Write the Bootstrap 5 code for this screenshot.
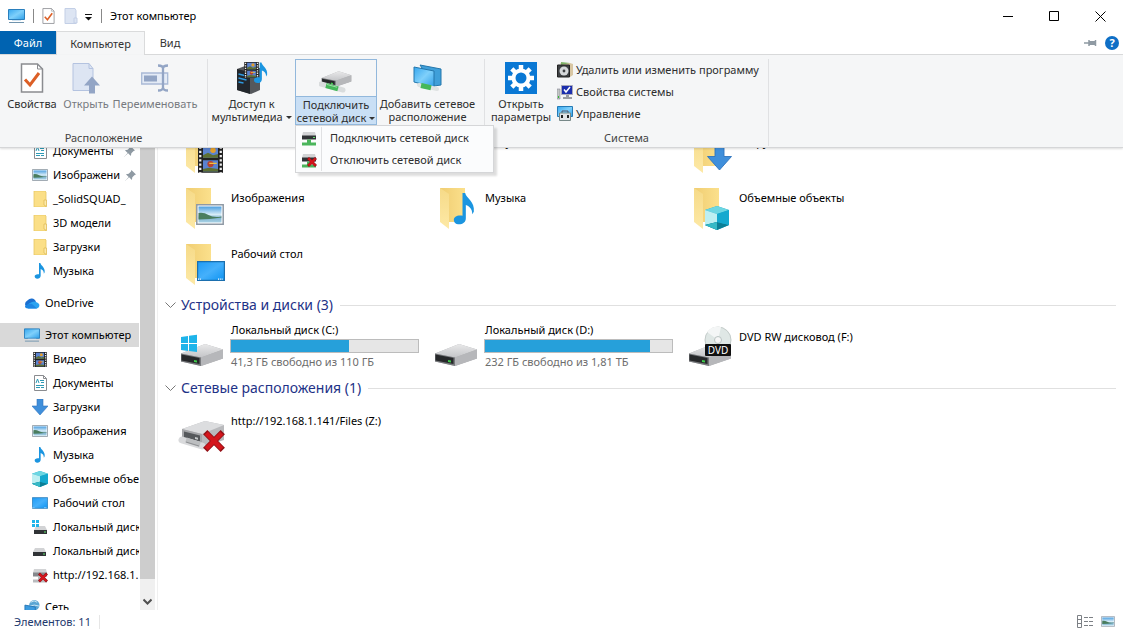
<!DOCTYPE html>
<html lang="ru">
<head>
<meta charset="utf-8">
<meta name="viewport" content="width=device-width, initial-scale=1">
<title>Этот компьютер</title>
<link href="https://cdn.jsdelivr.net/npm/bootstrap@5.3.0/dist/css/bootstrap.min.css" rel="stylesheet">
<style>
body{font-family:"Noto Sans","Open Sans",sans-serif;font-size:11px;line-height:16px;color:#000;background:#fff}
button{color:inherit}
a{color:inherit;text-decoration:none}
svg{display:block;flex:none}
.plain{background:none;border:0;padding:0}
.titlebar{height:31px;padding:1px 0 0 8px}
.vline{width:1px;height:14px;background:#888}
.winbtn{width:46px;height:29px}
.tabs{height:24px;border-bottom:1px solid #dadbdc}
.tab{height:24px;padding:0;color:#333}
.tab-file{width:56px;background:#0063b1;color:#fff;height:23px}
.tab-on{width:89px;background:#f5f6f7;border:1px solid #dadbdc;border-bottom:0}
.tab-view{width:50px}
.ribbon{height:93px;background:#f5f6f7;border-bottom:1px solid #d5d6d8;box-shadow:0 1px 2px #0002;z-index:5;color:#2e2e2e;flex-shrink:0}
.titlebar,.tabs,.stat{flex-shrink:0}
.rgroup{border-right:1px solid #e0e1e3;margin:4px 0 1px}
.rgroup>.cap{color:#444;height:16px}
.rbtn{height:66px;line-height:13px;padding-top:3px;white-space:nowrap;display:flex;flex-direction:column;align-items:center;flex-shrink:0}
.rbtn>svg{margin-bottom:3px}
.rbtn.off{color:#777a80}
.w64{width:64px}.w44{width:44px}.w94{width:94px}.w87{width:87px}.w101{width:101px}.w72{width:72px}
.g1{width:208px}.g2{width:277px}.g3{width:284px}
.rl{height:22px;white-space:nowrap;gap:3px}
.rbtn.split{border:1px solid #92b8dc;width:82px;padding:0;align-items:stretch}
.split .pic{height:37px;padding-top:6px;border-bottom:1px solid #92b8dc}
.split .pic svg{margin:0 auto}
.split .txt{height:28px;background:#c9dff5;padding-top:1px}
.car{display:inline-block;border:3px solid transparent;border-top-color:#333;border-bottom:0;vertical-align:2px}
.menu{--bs-dropdown-min-width:199px;--bs-dropdown-padding-y:1px;--bs-dropdown-font-size:11px;--bs-dropdown-border-radius:0;--bs-dropdown-bg:#fbfcfd;--bs-dropdown-item-padding-x:0px;--bs-dropdown-item-padding-y:0px;top:100%;left:0;border-color:#d5d6d8;box-shadow:3px 3px 2px #0002}
.menu .dropdown-item{height:22px;gap:4px;color:#2e2e2e;line-height:22px}
.menu .pic2{width:26px;height:22px;border-right:1px solid #e0e1e3}
.side{width:140px}
.side-in{margin-top:-10px}
.side a{height:24px;padding-left:24px;gap:5px;white-space:nowrap;overflow:hidden;margin-right:1px}
.side a.sub{padding-left:32px}
.side a.cur{background:#d9d9d9}
.side .sp{height:8px}
.sbar{width:15px;background:#f0f0f0}
.thumb{background:#cdcdcd}
.sbtn{height:31px}
.pane{border-left:1px solid #f0f0f0;margin-left:2px;padding-left:7px}
.pane-in{margin:-24px 0 0 13px}
.side-in,.pane-in{position:static;padding-top:1px}
.tiles{display:grid;grid-template-columns:repeat(auto-fill,254px)}
.tile{height:56px;gap:5px}
.tile>svg{margin-top:4px}
.tile .nm{padding-top:9px;white-space:nowrap}
.drv{height:59px}
.drv .nm{padding-top:5px;width:189px;margin-left:-1px}
.drv .nm>span{padding-left:1px;display:block}
.drv .solo{padding-top:12px}
.drv>svg{margin-top:6px}
.meter{--bs-progress-height:14px;--bs-progress-bg:#e6e6e6;--bs-progress-border-radius:0;--bs-progress-bar-bg:#26a0da;border:1px solid #bcbcbc;margin:1px 0}
.grey{color:#6d6d6d}
.sect{height:24px;font-size:14px;line-height:20px;color:#1e3287;gap:5px;margin-left:-13px;padding-right:7px}
.sect i{flex:1;height:1px;background:#e0e0e0;margin-left:2px}
.stat{height:23px;color:#1e3a6e;padding:0 8px 0 14px}
.stat .vb{width:1px;height:14px;background:#e6e6e6}
</style>
</head>
<body class="vh-100 d-flex flex-column overflow-hidden">
<svg width="0" height="0" class="position-absolute" aria-hidden="true">
<defs>
<linearGradient id="gs" x1="0" y1="0" x2="1" y2="1"><stop offset="0" stop-color="#35a6ee"/><stop offset=".5" stop-color="#7fd0fb"/><stop offset="1" stop-color="#2e9fe8"/></linearGradient>
<linearGradient id="gd" x1="0" y1="0" x2="0" y2="1"><stop offset="0" stop-color="#e9e9ea"/><stop offset="1" stop-color="#c4c5c8"/></linearGradient>
<linearGradient id="gf" x1="0" y1="0" x2="1" y2="0"><stop offset="0" stop-color="#f0cd72"/><stop offset="1" stop-color="#fbe08c"/></linearGradient>
<linearGradient id="gf2" x1="0" y1="0" x2="0" y2="1"><stop offset="0" stop-color="#f6da88"/><stop offset="1" stop-color="#fde9a6"/></linearGradient>
<linearGradient id="gk" x1="0" y1="0" x2="0" y2="1"><stop offset="0" stop-color="#4c9fe0"/><stop offset=".5" stop-color="#d7ecf7"/><stop offset=".7" stop-color="#7fb2cf"/><stop offset="1" stop-color="#a9d3e6"/></linearGradient>
<linearGradient id="gt" x1="0" y1="0" x2="1" y2="1"><stop offset="0" stop-color="#1e9bf5"/><stop offset=".5" stop-color="#45b0fb"/><stop offset="1" stop-color="#0c93f2"/></linearGradient>
</defs>
<symbol id="pc" viewBox="0 0 17 16"><path d="M0.5 1.5h16v10H.5z" fill="url(#gs)" stroke="#2a7fbd"/><path d="M1 14.500h15" stroke="#6f93ad"/><path d="M4 12.500h9" stroke="#cfe3f1"/></symbol>
<symbol id="doc" viewBox="0 0 24 30"><path d="M1.500 1h16l5 5v23h-21z" fill="#fff" stroke="#8a8c90" stroke-width="1.500"/><path d="M17.500 1v5h5" fill="none" stroke="#8a8c90"/><path d="M5 16.500l5 5.500 9-12" fill="none" stroke="#dc5f26" stroke-width="3"/></symbol>
<symbol id="docopen" viewBox="0 0 28 31"><path d="M1 1h16l4 5v22H1z" fill="#dde5f3" stroke="#b4c3e0"/><path d="M17 1v5h4" fill="none" stroke="#b4c3e0"/><path d="M20 14l8 9h-5v8h-6v-8h-5z" fill="#93a5c5"/></symbol>
<symbol id="ren" viewBox="0 0 28 28"><path d="M.7 9h26v11H.7z" fill="#e4ebf6" stroke="#a9b9d6" stroke-width="1.300"/><path d="M3 11.500h13v6H3z" fill="#93a5c5"/><path d="M17 1.500q5 0 5 3v19q0 3-5 3M27 1.500q-5 0-5 3M22 23.500q0 3 5 3" fill="none" stroke="#93a5c5" stroke-width="2.300"/></symbol>
<symbol id="film" viewBox="0 0 20 22"><path d="M0 0h20v22H0z" fill="#222"/><path d="M4 1h12v9H4zM4 12h12v9H4z" fill="#5b83cf"/><path d="M4 8l4-2 4 2 4-1v3H4zM4 19l5-1 7 1v2H4z" fill="#5d6f33"/><circle cx="12" cy="4" r="2.200" fill="#e3a02c"/><circle cx="10" cy="15" r="2.500" fill="#b7432f"/><path d="M9 14h6v1H9z" fill="#f2c13c"/><path d="M1.800 1v21M18.200 1v21" stroke="#eee" stroke-width="1.800" stroke-dasharray="1.800 1.600"/></symbol>
<symbol id="note" viewBox="0 0 16 24"><path d="M6.500 0h2c.8 4 7.500 6.500 6.500 14l-1.200 2c.2-4-2-6-4.800-7v10c0 3-2.500 4.500-5 4.500S0 22 0 20s2.500-3.700 6.500-3z" fill="#1b95e0"/></symbol>
<symbol id="media" viewBox="0 0 32 32"><path d="M1 7l8-3 15 2v22l-9 4-14-4z" fill="#55585c"/><path d="M1 7l13 3v22L1 28z" fill="#23272c"/><path d="M2.500 12l8 2M2.500 16l8 2M2.500 20l5 1" stroke="#2f9ae0" stroke-width="1.300"/><use href="#film" x="8" y="0" width="15" height="16"/><use href="#note" x="18" y="0" width="14" height="22"/></symbol>
<symbol id="drive" viewBox="0 0 44 24"><path d="M1 10.500L25 1l18 5.500v9L21 23 1 18.500z" fill="#aeafb2"/><path d="M1 10.500L25 1 43 6.500 21 14.500z" fill="url(#gd)"/><path d="M21 14.500L43 6.500v9L21 23z" fill="#b6b7ba"/><path d="M1 10.500l20 4V23L1 18.500z" fill="#77797c"/><path d="M1.500 11.500l18 3.600v6L1.500 17.500z" fill="#26282a"/><path d="M14 17l3 .6v2l-3-.6z" fill="#3fca4b"/></symbol>
<symbol id="ndrive" viewBox="0 0 44 28"><path d="M1 9L24 1l19 4v15L21 27 1 21z" fill="#b9babd"/><path d="M1 9L24 1l19 4-22 9z" fill="#dcdddf"/><path d="M1 9l20 5v13L1 21z" fill="#a5a6a9"/><path d="M3 11.500l16 4v6L3 17.500z" fill="#56595c"/><path d="M14 17l3 .7v2l-3-.7z" fill="#c6c9cb"/></symbol>
<symbol id="netd" viewBox="0 0 34 24"><use href="#drive" x="2" y="0" width="31" height="18"/><path d="M2 14l22 6" stroke="#d9dcdd" stroke-width="5" stroke-linecap="round"/><path d="M7 15.500l12 3.300" stroke="#45b85a" stroke-width="5"/><path d="M8 14.500l10 2.700" stroke="#9fe0a6"/></symbol>
<symbol id="screens" viewBox="0 0 30 28"><path d="M7 1l21 4v16l-7 1z" fill="#3f9fd9" stroke="#2477ac"/><path d="M1 3l20 4v16L1 18z" fill="url(#gs)" stroke="#2477ac"/><path d="M6 21l18 4" stroke="#dfe3e3" stroke-width="4" stroke-linecap="round"/><path d="M8 21.500l10 2.200" stroke="#45b85a" stroke-width="5"/></symbol>
<symbol id="gear" viewBox="0 0 32 32"><path d="M0 0h32v32H0z" fill="#0a78d4"/><circle cx="16" cy="16" r="7.500" fill="none" stroke="#fff" stroke-width="4"/><g stroke="#fff" stroke-width="4.500"><path d="M16 3v4.500M16 24.500V29M3 16h4.500M24.500 16H29M6.800 6.800L10 10M22 22l3.200 3.200M25.200 6.800L22 10M10 22l-3.200 3.200"/></g></symbol>
<symbol id="prog" viewBox="0 0 16 16"><path d="M3 1h10l3 1v11l-3 2z" fill="#d9c7a4"/><path d="M4 0l9 1-9 2z" fill="#7fb268"/><path d="M.5 3h12v12H.5z" fill="#3d4043" stroke="#222"/><circle cx="7" cy="9" r="4.500" fill="#d5d8da"/><circle cx="7" cy="9" r="1.400" fill="#3d4043"/></symbol>
<symbol id="sys" viewBox="0 0 16 16"><path d="M0 5h3v10H0z" fill="#c2c6c4" stroke="#889" stroke-width=".6"/><path d="M1 12h1v2H1z" fill="#3b3"/><path d="M4.500 1.500h11v9h-11z" fill="#1c2fae" stroke="#aab"/><path d="M7 5.500l2 2.500 4-5" fill="none" stroke="#fff" stroke-width="1.500"/><path d="M9 11h3v2h3v2H6v-2h3z" fill="#9a9da2"/></symbol>
<symbol id="mng" viewBox="0 0 16 16"><path d="M.5.5h15v10H.5z" fill="url(#gs)" stroke="#247ab5"/><path d="M5 7V5h6v2" fill="none" stroke="#556"/><path d="M2.500 7h11v7.500h-11z" fill="#e1e4e6" stroke="#788"/><path d="M4 9h2v3H4zM10 9h2v3h-2z" fill="#222"/></symbol>
<symbol id="mnet" viewBox="0 0 16 15"><path d="M2 1h12l1 4H1z" fill="#d2d3d5"/><path d="M1 4.500h14v4H1z" fill="#303336"/><path d="M12 6h2v1h-2z" fill="#5fe36a"/><path d="M6 8.500h4v3h5v3H1v-3h5z" fill="#4bb55c"/></symbol>
<symbol id="xx" viewBox="0 0 20 20"><path d="M2 2l16 16M18 2L2 18" stroke="#931218" stroke-width="5.500"/><path d="M3 3l14 14M17 3L3 17" stroke="#d4151c" stroke-width="4"/></symbol>
<symbol id="mnetx" viewBox="0 0 16 15"><use href="#mnet" width="16" height="15"/><use href="#xx" x="6" y="4" width="10" height="10"/></symbol>
<symbol id="hddx" viewBox="0 0 16 15"><path d="M2 1h12l1 4H1z" fill="#d2d3d5"/><path d="M1 4.500h14v4H1z" fill="#85888c"/><path d="M6 8.500h4v3h5v3H1v-3h5z" fill="#b9bbbe"/><use href="#xx" x="6" y="4" width="10" height="11"/></symbol>
<symbol id="hdd" viewBox="0 0 16 16"><path d="M3 5h9l2 4H1z" fill="#d2d3d5"/><path d="M1 9h13v4H1z" fill="#303336"/><path d="M11 10.500h2v1h-2z" fill="#5fe36a"/></symbol>
<symbol id="hddw" viewBox="0 0 16 16"><use href="#hdd" x="1" y="2" width="16" height="16"/><path d="M0 1h3v3H0zM4 1h3v3H4zM0 5h3v3H0zM4 5h3v3H4z" fill="#1eb4ea"/></symbol>
<symbol id="txt" viewBox="0 0 16 16"><path d="M2.500.5h9l3 3v12h-12z" fill="#fff" stroke="#8a8c90"/><path d="M11.500.5v3h3" fill="none" stroke="#8a8c90"/><path d="M8 5.500h4M9 7.500h3M4 10.500h8M4 12.500h4M9 12.500h3" stroke="#2e9ab5"/><path d="M4 8l1.500-4L7 8" fill="none" stroke="#2e9ab5"/></symbol>
<symbol id="pic" viewBox="0 0 28 21"><path d="M.8.8h26.400v19.400H.8z" fill="#fff" stroke="#8f9aa5" stroke-width="1.500"/><path d="M2.500 2.500h23v16h-23z" fill="url(#gk)"/><path d="M2.500 9q5-1 10 2t13 1.500v1q-12 2-23 2z" fill="#4a7d5e"/></symbol>
<symbol id="fold" viewBox="0 0 16 16"><path d="M2 0h11l1 1v15H2z" fill="#fbdf87" stroke="#e9c662" stroke-width=".8"/><path d="M12 9h2.500v6.500L12 14z" fill="#fdeaa9" stroke="#dcb750" stroke-width=".7"/></symbol>
<symbol id="dl" viewBox="0 0 16 16"><path d="M5 0h6v7h5l-8 9-8-9h5z" fill="#3f8fdb" stroke="#2f74bd" stroke-width=".6"/></symbol>
<symbol id="cube" viewBox="0 0 24 24"><path d="M12 0l12 4v15l-12 5L0 19V4z" fill="#16a6c6"/><path d="M12 0l12 4-12 4L0 4z" fill="#6cd6e2"/><path d="M0 4l12 4v8L0 19z" fill="#bdeff2"/><path d="M12 16l12 3-12 5-12-5z" fill="#0c7f96"/><path d="M12 8l12-4v15l-12-3z" fill="#14a9cf"/><path d="M0 19l12-3v8z" fill="#36b9c6"/></symbol>
<symbol id="desk" viewBox="0 0 28 20"><path d="M.6.6h26.800v18.800H.6z" fill="url(#gt)" stroke="#1b6fae" stroke-width="1.200"/><path d="M1 18.200h3M21 18.200h5" stroke="#fff" stroke-width="1.200" stroke-dasharray="1.200 1"/></symbol>
<symbol id="cloud" viewBox="0 0 16 12"><path d="M4 11a4 4 0 0 1-.6-7.500A5 5 0 0 1 12 4.500z" fill="#1b6fd0"/><path d="M4 11.500Q2 8 6 6q4-3 8 0a3 3 0 0 1-1 5.500z" fill="#2aa3f0"/><path d="M1 9q4-3 7-2l5 4.500H4Q1 11.500 1 9z" fill="#1c86e3"/></symbol>
<symbol id="net" viewBox="0 0 17 16"><circle cx="11" cy="6" r="5.500" fill="#5aa6d4"/><path d="M7 3q4-3 7 0M6 7q5-2 10 0" stroke="#cfe7f4" fill="none"/><path d="M1 6l11 2v7L1 14z" fill="#3b9be0" stroke="#2a78b5"/></symbol>
<symbol id="pin" viewBox="0 0 12 12"><path d="M7 0l5 5-1.500.5L8 8l-.5 3L4.500 8 0 12l4-4.500L1 4.500 4 4l2.500-2.500z" fill="#8f9aa3"/></symbol>
<symbol id="bf" viewBox="0 0 48 48"><path d="M8 3h25v34H12z" fill="url(#gf)"/><path d="M8 3l9 6v35l-9-7z" fill="url(#gf2)"/></symbol>
<symbol id="dvd" viewBox="0 0 48 48"><use href="#drive" x="2" y="20" width="44" height="24"/><circle cx="32" cy="17" r="13" fill="#dfe7e5" stroke="#c3cbc9"/><path d="M32 17L21 9a13 13 0 0 1 14-5z" fill="#f4f6f6"/><circle cx="32" cy="17" r="3.500" fill="#f6f6f6" stroke="#b9c3c2"/><rect x="19" y="21" width="26" height="12" rx="1" fill="#111"/><text x="32" y="31" font-size="10" text-anchor="middle" fill="#fff">DVD</text></symbol>
</svg>

<header class="titlebar d-flex align-items-center">
  <svg width="17" height="16"><use href="#pc"/></svg>
  <span class="vline ms-2"></span>
  <button class="plain ms-2" aria-label="Свойства"><svg width="13" height="16"><use href="#doc"/></svg></button>
  <button class="plain ms-2" aria-label="Открыть"><svg width="16" height="16" viewBox="0 0 16 16"><path d="M2 .5h10l1 2v13H2z" fill="#dde5f3" stroke="#c3cfe6"/><path d="M11 10h3v5h-3z" fill="#dde5f3" stroke="#c3cfe6"/></svg></button>
  <button class="plain ms-1" aria-label="Настройка панели"><svg width="10" height="16" viewBox="0 0 10 16"><path d="M2 6.500h7" stroke="#111"/><path d="M2 9h7l-3.500 3.500z" fill="#111"/></svg></button>
  <span class="vline ms-2 me-2"></span>
  <span>Этот компьютер</span>
  <div class="ms-auto d-flex">
    <button class="winbtn plain d-grid" aria-label="Свернуть"><svg class="m-auto" width="11" height="11"><path d="M0 5.500h10" stroke="#000"/></svg></button>
    <button class="winbtn plain d-grid" aria-label="Развернуть"><svg class="m-auto" width="11" height="11"><path d="M.5.5h9v9h-9z" fill="none" stroke="#000"/></svg></button>
    <button class="winbtn plain d-grid" aria-label="Закрыть"><svg class="m-auto" width="11" height="11"><path d="M.5.5l10 10M10.500.5l-10 10" stroke="#000"/></svg></button>
  </div>
</header>
<nav class="tabs d-flex" aria-label="Вкладки">
  <button class="tab tab-file border-0">Файл</button>
  <button class="tab tab-on">Компьютер</button>
  <button class="tab tab-view plain">Вид</button>
  <div class="ms-auto d-flex align-items-center gap-2 pe-1">
    <button class="plain" aria-label="Закрепить ленту"><svg width="13" height="8"><path d="M0 4h5M5 1v6M11.500 1v6" stroke="#8f9aa3" stroke-width="1.500"/><path d="M5 2h6v4H5z" fill="#8f9aa3"/></svg></button>
    <button class="plain" aria-label="Справка"><svg width="14" height="14" viewBox="0 0 14 14"><circle cx="7" cy="7" r="7" fill="#0f6fc6"/><text x="7" y="11" font-size="11" font-weight="700" fill="#fff" text-anchor="middle">?</text></svg></button>
  </div>
</nav>
<section class="ribbon d-flex position-relative">
  <div class="rgroup g1 d-flex flex-column">
    <div class="d-flex">
      <button class="rbtn plain w64"><svg width="24" height="32"><use href="#doc"/></svg><span>Свойства</span></button>
      <button class="rbtn plain off w44"><svg width="28" height="32"><use href="#docopen"/></svg><span>Открыть</span></button>
      <button class="rbtn plain off w94"><svg width="28" height="32"><use href="#ren"/></svg><span>Переименовать</span></button>
    </div>
    <div class="cap text-center mt-auto">Расположение</div>
  </div>
  <div class="rgroup g2 d-flex align-items-start">
    <button class="rbtn plain w87"><svg width="32" height="32"><use href="#media"/></svg><span>Доступ к<br>мультимедиа <span class="car"></span></span></button>
    <div class="position-relative">
      <button class="rbtn plain split" aria-expanded="true"><span class="pic"><svg width="34" height="32"><use href="#netd"/></svg></span><span class="txt">Подключить<br>сетевой диск <span class="car"></span></span></button>
      <ul class="menu dropdown-menu show m-0">
        <li><a class="dropdown-item d-flex" href="#"><span class="pic2 d-grid"><svg class="m-auto" width="16" height="15"><use href="#mnet"/></svg></span><span class="ps-1">Подключить сетевой диск</span></a></li>
        <li><a class="dropdown-item d-flex" href="#"><span class="pic2 d-grid"><svg class="m-auto" width="16" height="15"><use href="#mnetx"/></svg></span><span class="ps-1">Отключить сетевой диск</span></a></li>
      </ul>
    </div>
    <button class="rbtn plain w101"><svg width="30" height="32"><use href="#screens"/></svg><span>Добавить сетевое<br>расположение</span></button>
  </div>
  <div class="rgroup g3 d-flex flex-column">
    <div class="d-flex">
      <button class="rbtn plain w72"><svg width="32" height="32"><use href="#gear"/></svg><span>Открыть<br>параметры</span></button>
      <div class="d-flex flex-column">
        <button class="rl plain d-flex align-items-center"><svg width="16" height="16"><use href="#prog"/></svg>Удалить или изменить программу</button>
        <button class="rl plain d-flex align-items-center"><svg width="16" height="16"><use href="#sys"/></svg>Свойства системы</button>
        <button class="rl plain d-flex align-items-center"><svg width="16" height="16"><use href="#mng"/></svg>Управление</button>
      </div>
    </div>
    <div class="cap text-center mt-auto">Система</div>
  </div>
</section>
<main class="d-flex flex-grow-1 overflow-hidden">
  <nav class="side overflow-hidden flex-shrink-0" aria-label="Область переходов"><div class="side-in">
    <a class="sub d-flex align-items-center" href="#"><svg width="16" height="16"><use href="#txt"/></svg>Документы<svg class="ms-auto me-1" width="11" height="11"><use href="#pin"/></svg></a>
    <a class="sub d-flex align-items-center" href="#"><svg width="16" height="12"><use href="#pic"/></svg>Изображени<svg class="ms-auto me-1" width="11" height="11"><use href="#pin"/></svg></a>
    <a class="sub d-flex align-items-center" href="#"><svg width="16" height="16"><use href="#fold"/></svg>_SolidSQUAD_</a>
    <a class="sub d-flex align-items-center" href="#"><svg width="16" height="16"><use href="#fold"/></svg>3D модели</a>
    <a class="sub d-flex align-items-center" href="#"><svg width="16" height="16"><use href="#fold"/></svg>Загрузки</a>
    <a class="sub d-flex align-items-center" href="#"><svg width="16" height="16"><use href="#note"/></svg>Музыка</a>
    <div class="sp"></div>
    <a class="d-flex align-items-center" href="#"><svg width="16" height="12"><use href="#cloud"/></svg>OneDrive</a>
    <div class="sp"></div>
    <a class="cur d-flex align-items-center" href="#"><svg width="16" height="16"><use href="#pc"/></svg>Этот компьютер</a>
    <a class="sub d-flex align-items-center" href="#"><svg width="16" height="15"><use href="#film"/></svg>Видео</a>
    <a class="sub d-flex align-items-center" href="#"><svg width="16" height="16"><use href="#txt"/></svg>Документы</a>
    <a class="sub d-flex align-items-center" href="#"><svg width="16" height="16"><use href="#dl"/></svg>Загрузки</a>
    <a class="sub d-flex align-items-center" href="#"><svg width="16" height="12"><use href="#pic"/></svg>Изображения</a>
    <a class="sub d-flex align-items-center" href="#"><svg width="16" height="16"><use href="#note"/></svg>Музыка</a>
    <a class="sub d-flex align-items-center" href="#"><svg width="16" height="16"><use href="#cube"/></svg>Объемные объекты</a>
    <a class="sub d-flex align-items-center" href="#"><svg width="16" height="12"><use href="#desk"/></svg>Рабочий стол</a>
    <a class="sub d-flex align-items-center" href="#"><svg width="16" height="16"><use href="#hddw"/></svg>Локальный диск (C:)</a>
    <a class="sub d-flex align-items-center" href="#"><svg width="16" height="16"><use href="#hdd"/></svg>Локальный диск (D:)</a>
    <a class="sub d-flex align-items-center" href="#"><svg width="16" height="15"><use href="#hddx"/></svg>http://192.168.1.141</a>
    <div class="sp"></div>
    <a class="d-flex align-items-center" href="#"><svg width="16" height="16"><use href="#net"/></svg>Сеть</a>
  </div></nav>
  <div class="sbar d-flex flex-column flex-shrink-0">
    <div class="thumb flex-grow-1"></div>
    <button class="sbtn plain d-grid" aria-label="Вниз"><svg class="mx-auto mt-auto mb-1" width="9" height="8"><path d="M.5 1.500l4 4 4-4" fill="none" stroke="#505050" stroke-width="2"/></svg></button>
  </div>
  <section class="pane flex-grow-1 overflow-hidden"><div class="pane-in">
    <div class="tiles">
      <div class="tile d-flex"><svg width="48" height="48"><use href="#bf"/><use href="#film" x="20" y="16" width="25" height="28"/></svg><span class="nm">Видео</span></div>
      <div class="tile d-flex"><span class="ps-5"></span><span class="nm">Документы</span></div>
      <div class="tile d-flex"><svg width="48" height="48"><use href="#bf"/><use href="#dl" x="21" y="17" width="25" height="24"/></svg><span class="nm">Загрузки</span></div>
      <div class="tile d-flex"><svg width="48" height="48"><use href="#bf"/><use href="#pic" x="18" y="19" width="28" height="21"/></svg><span class="nm">Изображения</span></div>
      <div class="tile d-flex"><svg width="48" height="48"><use href="#bf"/><use href="#note" x="20" y="8" width="25" height="32"/></svg><span class="nm">Музыка</span></div>
      <div class="tile d-flex"><svg width="48" height="48"><use href="#bf"/><use href="#cube" x="19" y="21" width="24" height="24"/></svg><span class="nm">Объемные объекты</span></div>
      <div class="tile d-flex"><svg width="48" height="48"><use href="#bf"/><use href="#desk" x="19" y="20" width="28" height="20"/></svg><span class="nm">Рабочий стол</span></div>
    </div>
    <div class="sect d-flex align-items-center"><svg width="11" height="7"><path d="M.5.500l5 5 5-5" fill="none" stroke="#777"/></svg><span>Устройства и диски (3)</span><i></i></div>
    <div class="tiles">
      <div class="tile drv d-flex"><svg width="48" height="48"><use href="#drive" x="2" y="20" width="44" height="24"/><path d="M3 14l7-1v7H3zM11 12.800l8-1V20h-8zM3 21h7v7l-7-1zM11 21h8v8l-8-1z" fill="#1eb4ea"/></svg><div class="nm"><span>Локальный диск (C:)</span><div class="progress meter"><div class="progress-bar" style="width:63%"></div></div><span class="grey">41,3 ГБ свободно из 110 ГБ</span></div></div>
      <div class="tile drv d-flex"><svg width="48" height="48"><use href="#drive" x="2" y="20" width="44" height="24"/></svg><div class="nm"><span>Локальный диск (D:)</span><div class="progress meter"><div class="progress-bar" style="width:88%"></div></div><span class="grey">232 ГБ свободно из 1,81 ТБ</span></div></div>
      <div class="tile drv d-flex"><svg width="48" height="48"><use href="#dvd"/></svg><div class="nm solo"><span>DVD RW дисковод (F:)</span></div></div>
    </div>
    <div class="sect d-flex align-items-center"><svg width="11" height="7"><path d="M.5.500l5 5 5-5" fill="none" stroke="#777"/></svg><span>Сетевые расположения (1)</span><i></i></div>
    <div class="tiles">
      <div class="tile d-flex pt-1"><svg width="48" height="54"><use href="#ndrive" x="3" y="12" width="44" height="28"/><path d="M4 32l20 6" stroke="#d9dadc" stroke-width="7" stroke-linecap="round"/><path d="M8 32l14 4.500" stroke="#bcbec0" stroke-width="5"/><path d="M8 34l13 4" stroke="#8e9093"/><use href="#xx" x="25" y="22" width="22" height="22"/></svg><span class="nm">http://192.168.1.141/Files (Z:)</span></div>
    </div>
  </div></section>
</main>
<footer class="stat d-flex align-items-center">
  <span>Элементов: 11</span><span class="vb ms-2"></span>
  <div class="ms-auto d-flex align-items-center gap-2">
    <button class="plain" aria-label="Таблица"><svg width="16" height="13"><path d="M.5.500h4v12h-4zM.5 4.500h4M.5 8.500h4M7 2.500h4M12 2.500h4M7 6.500h4M12 6.500h4M7 10.500h4M12 10.500h4" fill="none" stroke="#7c8085"/></svg></button>
    <button class="plain" aria-label="Крупные значки"><svg width="14" height="11"><use href="#pic"/></svg></button>
  </div>
</footer>
<script src="https://cdn.jsdelivr.net/npm/bootstrap@5.3.0/dist/js/bootstrap.bundle.min.js"></script>
</body>
</html>
